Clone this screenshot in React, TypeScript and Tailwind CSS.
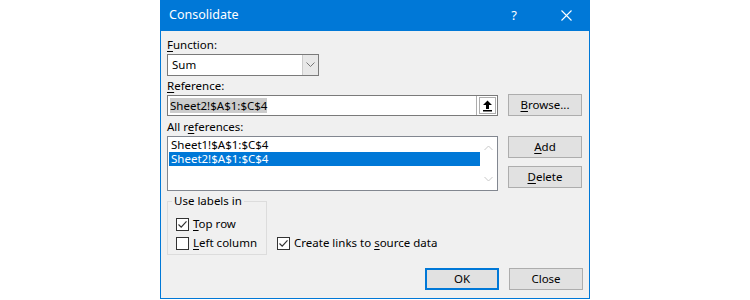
import React from "react";

const U = ({ children }: { children: React.ReactNode }) => (
  <span className="underline underline-offset-[2px] decoration-[1px]">{children}</span>
);

const Check = ({ checked }: { checked: boolean }) => (
  <span className="w-[13px] h-[13px] border border-[#333333] bg-white flex items-center justify-center shrink-0">
    {checked && (
      <svg width="11" height="11" viewBox="0 0 11 11">
        <path d="M1.5 5.5 L4.2 8.2 L9.5 2.3" fill="none" stroke="#333" strokeWidth="1.2" />
      </svg>
    )}
  </span>
);

const Btn = ({ children, def }: { children: React.ReactNode; def?: boolean }) => (
  <div
    className={
      "w-[74px] h-[22px] flex items-center justify-center bg-[#e1e1e1] text-[11.5px] text-black " +
      (def ? "border-2 border-[#0078d7]" : "border border-[#adadad]")
    }
  >
    {children}
  </div>
);

export default function App() {
  return (
    <div
      className="w-[750px] h-[300px] bg-white relative overflow-hidden"
      style={{ fontFamily: '"Noto Sans", "Open Sans", sans-serif' }}
    >
      <div className="ml-[160px] w-[430px] h-[299px] border border-t-0 border-[#0078d7] bg-[#f0f0f0] flex flex-col">
        {/* title bar */}
        <div className="h-[31px] bg-[#0078d7] flex items-center text-white shrink-0">
          <div className="ml-[8px] text-[12.5px] leading-none">Consolidate</div>
          <div className="ml-auto mr-[44px] text-[13px] leading-none">?</div>
          <svg className="mr-[17px]" width="11" height="11" viewBox="0 0 11 11">
            <path d="M0.5 0.5 L10.5 10.5 M10.5 0.5 L0.5 10.5" stroke="white" strokeWidth="1.1" />
          </svg>
        </div>

        <div className="pl-[6px] pr-[6px] flex flex-col text-[11.5px] text-black">
          <div className="mt-[5px] h-[18px] leading-[18px]">
            <U>F</U>unction:
          </div>
          <div className="w-[152px] h-[22px] border border-[#7a7a7a] bg-white flex">
            <div className="flex-1 pl-[4px] leading-[20px]">Sum</div>
            <div className="w-[16px] bg-[#e8e8e8] border-l border-[#cccccc] flex items-center justify-center">
              <svg width="9" height="6" viewBox="0 0 9 6">
                <path d="M0.5 0.5 L4.5 4.5 L8.5 0.5" fill="none" stroke="#777" strokeWidth="1" />
              </svg>
            </div>
          </div>
          <div className="mt-[1px] h-[18px] leading-[18px]">
            <U>R</U>eference:
          </div>
          <div className="flex items-start gap-[10px]">
            <div className="w-[331px] h-[21px] border border-[#7a7a7a] bg-white flex">
              <div className="flex-1 pl-[2px] flex items-center">
                <span className="bg-[#cccccc] leading-[15px]">Sheet2!$A$1:$C$4</span>
              </div>
              <div className="w-[21px] border-l border-[#adadad] bg-white flex items-center justify-center">
                <div className="w-[17px] h-[17px] border border-[#adadad] flex items-center justify-center">
                  <svg width="11" height="12" viewBox="0 0 11 12">
                    <path d="M5.5 0.5 L10 5 L7 5 L7 9 L4 9 L4 5 L1 5 Z" fill="#000" />
                    <rect x="1" y="10" width="9" height="1.5" fill="#000" />
                  </svg>
                </div>
              </div>
            </div>
            <div className="-mt-[1px]">
              <Btn>
                <U>B</U>rowse...
              </Btn>
            </div>
          </div>
          <div className="mt-[1px] h-[19px] leading-[19px]">
            All r<U>e</U>ferences:
          </div>
          <div className="flex items-start gap-[10px]">
            <div className="w-[331px] h-[55px] border border-[#828790] bg-white flex">
              <div className="flex-1 pl-[1px] pt-[1px] flex flex-col">
                <div className="h-[14px] leading-[14px] pl-[2px]">Sheet1!$A$1:$C$4</div>
                <div className="h-[14px] leading-[14px] pl-[2px] bg-[#0078d7] text-white">Sheet2!$A$1:$C$4</div>
              </div>
              <div className="w-[17px] flex flex-col items-center justify-between py-[8px]">
                <svg width="9" height="6" viewBox="0 0 9 6">
                  <path d="M0.5 5 L4.5 1 L8.5 5" fill="none" stroke="#c8c8c8" strokeWidth="1" />
                </svg>
                <svg width="9" height="6" viewBox="0 0 9 6">
                  <path d="M0.5 1 L4.5 5 L8.5 1" fill="none" stroke="#c8c8c8" strokeWidth="1" />
                </svg>
              </div>
            </div>
            <div className="flex flex-col gap-[8px]">
              <Btn>
                <U>A</U>dd
              </Btn>
              <Btn>
                <U>D</U>elete
              </Btn>
            </div>
          </div>

          <div className="mt-[10px] flex items-end">
            <div className="relative w-[100px] h-[54px] border border-[#dcdcdc] mt-[0px]">
              <div className="absolute -top-[10px] left-[4px] px-[2px] bg-[#f0f0f0] leading-[18px]">Use labels in</div>
              <div className="absolute left-[8px] top-[15px] flex items-center gap-[4px]">
                <Check checked />
                <span className="leading-[14px]">
                  <U>T</U>op row
                </span>
              </div>
              <div className="absolute left-[8px] top-[34px] flex items-center gap-[4px]">
                <Check checked={false} />
                <span className="leading-[14px]">
                  <U>L</U>eft column
                </span>
              </div>
            </div>
            <div className="ml-[10px] mb-[5px] flex items-center gap-[4px]">
              <Check checked />
              <span className="leading-[14px]">
                Create links to <U>s</U>ource data
              </span>
            </div>
          </div>

          <div className="mt-[13px] flex justify-end gap-[10px]">
            <Btn def>OK</Btn>
            <Btn>Close</Btn>
          </div>
        </div>
      </div>
    </div>
  );
}
